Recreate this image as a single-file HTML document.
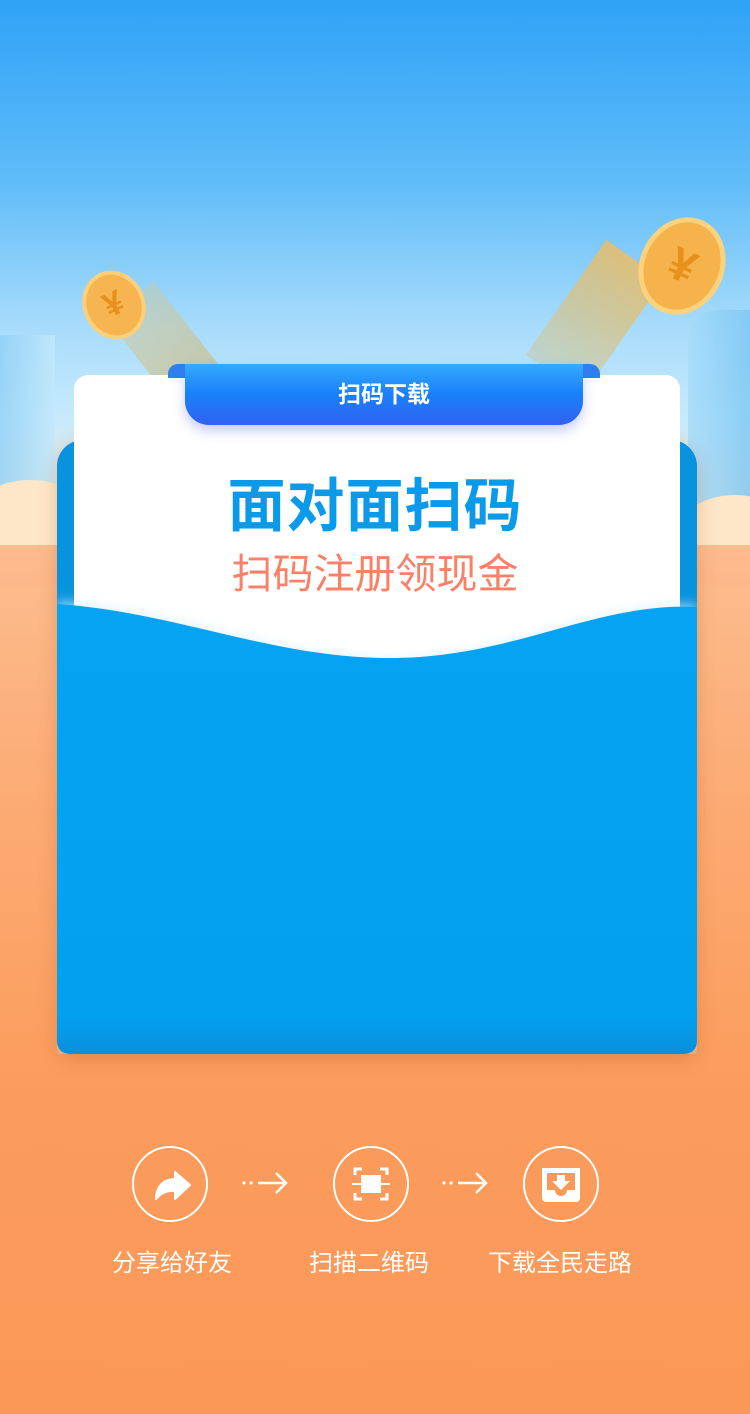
<!DOCTYPE html>
<html><head><meta charset="utf-8"><style>
*{margin:0;padding:0;box-sizing:border-box}
body{width:750px;height:1414px;overflow:hidden;position:relative;font-family:"Liberation Sans","Noto Sans CJK SC",sans-serif;
background:linear-gradient(180deg,#2fa2f7 0px,#5fbcf8 180px,#a9dcfb 330px,#c7ebfc 420px,#fde0c4 520px,#fcbc8e 560px,#fcab74 800px,#fb9c5c 1100px,#fb9858 1414px);}
.abs{position:absolute}
.lbl{position:absolute;top:1243px;color:#fff;font-size:24px;width:200px;text-align:center}
.circ{position:absolute;top:1146px;width:76px;height:76px;border:2px solid #fff;border-radius:50%}
.arr{position:absolute;top:1170px}
</style></head><body>
<div class="abs" style="left:0;top:335px;width:55px;height:200px;background:linear-gradient(90deg,#8fd0f6,#c4e8fc);opacity:.8"></div>
<div class="abs" style="left:688px;top:310px;width:62px;height:220px;background:linear-gradient(90deg,#a6dcfa,#7cc6f4);border-radius:30px 0 0 0;opacity:.8"></div>
<div class="abs" style="left:-30px;top:480px;width:120px;height:80px;background:#fde7c8;border-radius:50%"></div>
<div class="abs" style="left:680px;top:495px;width:110px;height:70px;background:#fde7c8;border-radius:50%"></div>
<div class="abs" style="left:0;top:545px;width:750px;height:40px;background:linear-gradient(180deg,#fcbc8e,#fcb789)"></div>
<div class="abs" style="left:100px;top:300px;width:60px;height:120px;background:linear-gradient(180deg,rgba(233,196,120,.3),rgba(200,190,140,.8));transform:rotate(-38deg);transform-origin:top"></div>
<div class="abs" style="left:600px;top:260px;width:70px;height:140px;background:linear-gradient(180deg,rgba(230,190,110,.9),rgba(200,200,160,.5));transform:rotate(35deg);transform-origin:top"></div>
<div class="abs" style="left:83px;top:270px;width:62px;height:70px;border-radius:50%;background:#f6b550;border:4px solid #fcd07a;transform:rotate(-25deg);color:#e98f1b;font-size:34px;font-weight:bold;text-align:center;line-height:60px">¥</div>
<div class="abs" style="left:640px;top:216px;width:84px;height:100px;border-radius:50%;background:#f6b24b;border:5px solid #fcd27c;transform:rotate(25deg);color:#e8901c;font-size:46px;font-weight:bold;text-align:center;line-height:88px">¥</div>
<div class="abs" style="left:57px;top:440px;width:640px;height:614px;background:#0793de;border-radius:26px 26px 14px 14px;box-shadow:0 6px 18px rgba(180,90,30,.3)"></div>
<div class="abs" style="left:74px;top:375px;width:606px;height:300px;background:#fff;border-radius:14px"></div>
<div class="abs" style="left:168px;top:364px;width:432px;height:14px;background:#2f7ff0;border-radius:10px 10px 0 0"></div>
<div class="abs" style="left:185px;top:364px;width:398px;height:61px;background:linear-gradient(180deg,#35aaff,#1980f9 50%,#3262f2);border-radius:0 0 24px 24px;box-shadow:0 6px 12px rgba(70,90,240,.3);color:#fff;font-size:23px;font-weight:bold;text-align:center;line-height:60px">扫码下载</div>
<div class="abs" style="left:0;top:459px;width:750px;text-align:center;color:#0a9ae9;font-size:58px;font-weight:bold;letter-spacing:1px">面对面扫码</div>
<div class="abs" style="left:0;top:540px;width:750px;text-align:center;color:#fa8067;font-size:41px;letter-spacing:0px">扫码注册领现金</div>
<svg class="abs" style="left:57px;top:580px" width="640" height="474" viewBox="0 0 640 474">
<defs><linearGradient id="g" x1="0" y1="0" x2="0" y2="1"><stop offset="0" stop-color="#06a3f2"/><stop offset="0.92" stop-color="#03a0ef"/><stop offset="1" stop-color="#0a8fdc"/></linearGradient>
<filter id="b"><feGaussianBlur stdDeviation="6"/></filter></defs>
<path d="M0 22 C120 30 220 80 340 78 C460 76 540 20 640 26 L640 460 Q640 474 626 474 L14 474 Q0 474 0 460Z" fill="#d9efff" filter="url(#b)" opacity=".8"/>
<path d="M0 24 C120 32 220 80 340 78 C460 76 540 22 640 27 L640 460 Q640 474 626 474 L14 474 Q0 474 0 460Z" fill="url(#g)"/>
</svg>
<div class="circ" style="left:132px"><svg width="72" height="72" viewBox="0 0 72 72"><path d="M22 51 C22 38 30 31 41 31 L41 24 L56 37 L41 51 L41 43 C33 42 27 45 22 51Z" fill="#fff" stroke="#fff" stroke-width="2" stroke-linejoin="round"/></svg></div>
<div class="circ" style="left:333px"><svg width="72" height="72" viewBox="0 0 72 72" fill="none" stroke="#fff" stroke-width="3"><path d="M20 27V21h7M45 21h7v6M52 45v6h-7M27 51h-7v-6"/><rect x="26" y="27" width="20" height="18" fill="#fff" stroke="none"/><path d="M17 36h38" stroke-width="2"/></svg></div>
<div class="circ" style="left:523px"><svg width="72" height="72" viewBox="0 0 72 72"><path d="M17 20h38v30a4 4 0 0 1-4 4H21a4 4 0 0 1-4-4Z" fill="#fff"/><path d="M22 25h28v17h-8a6 6 0 0 1-12 0h-8Z" fill="#fb9a58"/><path d="M32 27h8v6h5l-9 9l-9-9h5Z" fill="#fff"/></svg></div>
<svg class="arr" style="left:240px" width="52" height="26"><circle cx="4" cy="13" r="1.6" fill="#fff"/><circle cx="11" cy="13" r="1.6" fill="#fff"/><path d="M18 13h28M36 3l10 10-10 10" stroke="#fff" stroke-width="2.4" fill="none"/></svg>
<svg class="arr" style="left:440px" width="52" height="26"><circle cx="4" cy="13" r="1.6" fill="#fff"/><circle cx="11" cy="13" r="1.6" fill="#fff"/><path d="M18 13h28M36 3l10 10-10 10" stroke="#fff" stroke-width="2.4" fill="none"/></svg>
<div class="lbl" style="left:72px">分享给好友</div>
<div class="lbl" style="left:269px">扫描二维码</div>
<div class="lbl" style="left:460px">下载全民走路</div>
</body></html>
